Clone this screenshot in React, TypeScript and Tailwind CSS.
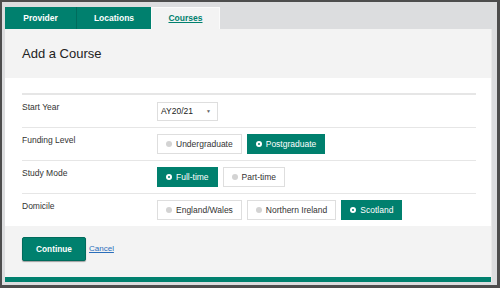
import React from "react";

const TEAL = "bg-[#00806e]";

function Option({ label, selected }: { label: string; selected?: boolean }) {
  return (
    <div
      className={
        selected
          ? "flex h-[20px] items-center border border-[#00806e] bg-[#00806e] pl-[8px] pr-[8px] text-white"
          : "flex h-[20px] items-center border border-[#dedede] bg-white pl-[8px] pr-[8px] text-[#333]"
      }
    >
      {selected ? (
        <span className="flex h-[6px] w-[6px] items-center justify-center rounded-full bg-white">
          <span className="h-[2px] w-[2px] rounded-full bg-[#00806e]" />
        </span>
      ) : (
        <span className="h-[6px] w-[6px] rounded-full bg-[#d3d3d3]" />
      )}
      <span className="ml-[4px] text-[8.5px] leading-[12px]">{label}</span>
    </div>
  );
}

function Row({
  label,
  first,
  children,
}: {
  label: string;
  first?: boolean;
  children: React.ReactNode;
}) {
  return (
    <div
      className={
        first
          ? "flex border-t-2 border-[#e6e6e6] pt-[6px] pb-[6px]"
          : "flex border-t border-[#e6e6e6] pt-[6px] pb-[6px]"
      }
    >
      <div className="w-[135px] shrink-0 text-[8.5px] leading-[12px] text-[#333]">
        {label}
      </div>
      <div className="flex h-[20px] gap-[5px]">{children}</div>
    </div>
  );
}

export default function App() {
  return (
    <div
      className="h-[288px] w-[500px] border-b-[3px] border-l-2 border-r-[3px] border-t-2 border-[#4d4d4d] bg-[#dcdddf] pb-[3px] pl-[3px] pr-[6px] pt-[5px]"
      style={{ fontFamily: '"Liberation Sans", Arial, sans-serif' }}
    >
      <div className="flex h-[22px]">
        <div className={`flex w-[71px] items-center justify-center ${TEAL} text-[8.5px] font-bold text-white`}>
          Provider
        </div>
        <div className="w-px bg-[#006c5d]" />
        <div className={`flex w-[74px] items-center justify-center ${TEAL} text-[8.5px] font-bold text-white`}>
          Locations
        </div>
        <div className="flex w-[69px] items-center justify-center border-x border-t border-[#fafafa] bg-[#f3f3f3] text-[8.5px] font-bold text-[#00806e] underline">
          Courses
        </div>
      </div>
      <div className="flex w-[486px] flex-col shadow-[1px_0_0_#eaeaea]">
        <div className="flex h-[49px] items-center bg-[#f3f3f3] pl-[17px] text-[13px] text-[#222]">
          Add a Course
        </div>
        <div className="h-[148px] bg-white pl-[17px] pr-[15px] pt-[15px]">
          <Row label="Start Year" first>
            <div className="mt-[1px] flex h-[19px] w-[61px] items-center justify-between border border-[#dedede] bg-white pl-[3px] pr-[6px] text-[8.5px] text-[#222]">
              <span>AY20/21</span>
              <span className="text-[5px] text-[#666]">▼</span>
            </div>
          </Row>
          <Row label="Funding Level">
            <Option label="Undergraduate" />
            <Option label="Postgraduate" selected />
          </Row>
          <Row label="Study Mode">
            <Option label="Full-time" selected />
            <Option label="Part-time" />
          </Row>
          <Row label="Domicile">
            <Option label="England/Wales" />
            <Option label="Northern Ireland" />
            <Option label="Scotland" selected />
          </Row>
        </div>
        <div className="flex h-[51px] items-start bg-[#f3f3f3] pl-[17px] pt-[11px]">
          <button className="flex h-[24px] w-[64px] items-center justify-center rounded-[2px] border border-[#006b5c] bg-[#00806e] text-[8.3px] font-bold text-white shadow-[0_1px_1px_rgba(0,0,0,0.35)]">
            Continue
          </button>
          <a className="ml-[3px] mt-[6px] text-[8px] text-[#2a6ebb] underline">Cancel</a>
        </div>
        <div className="h-[5px] bg-[#00806e]" />
      </div>
    </div>
  );
}
